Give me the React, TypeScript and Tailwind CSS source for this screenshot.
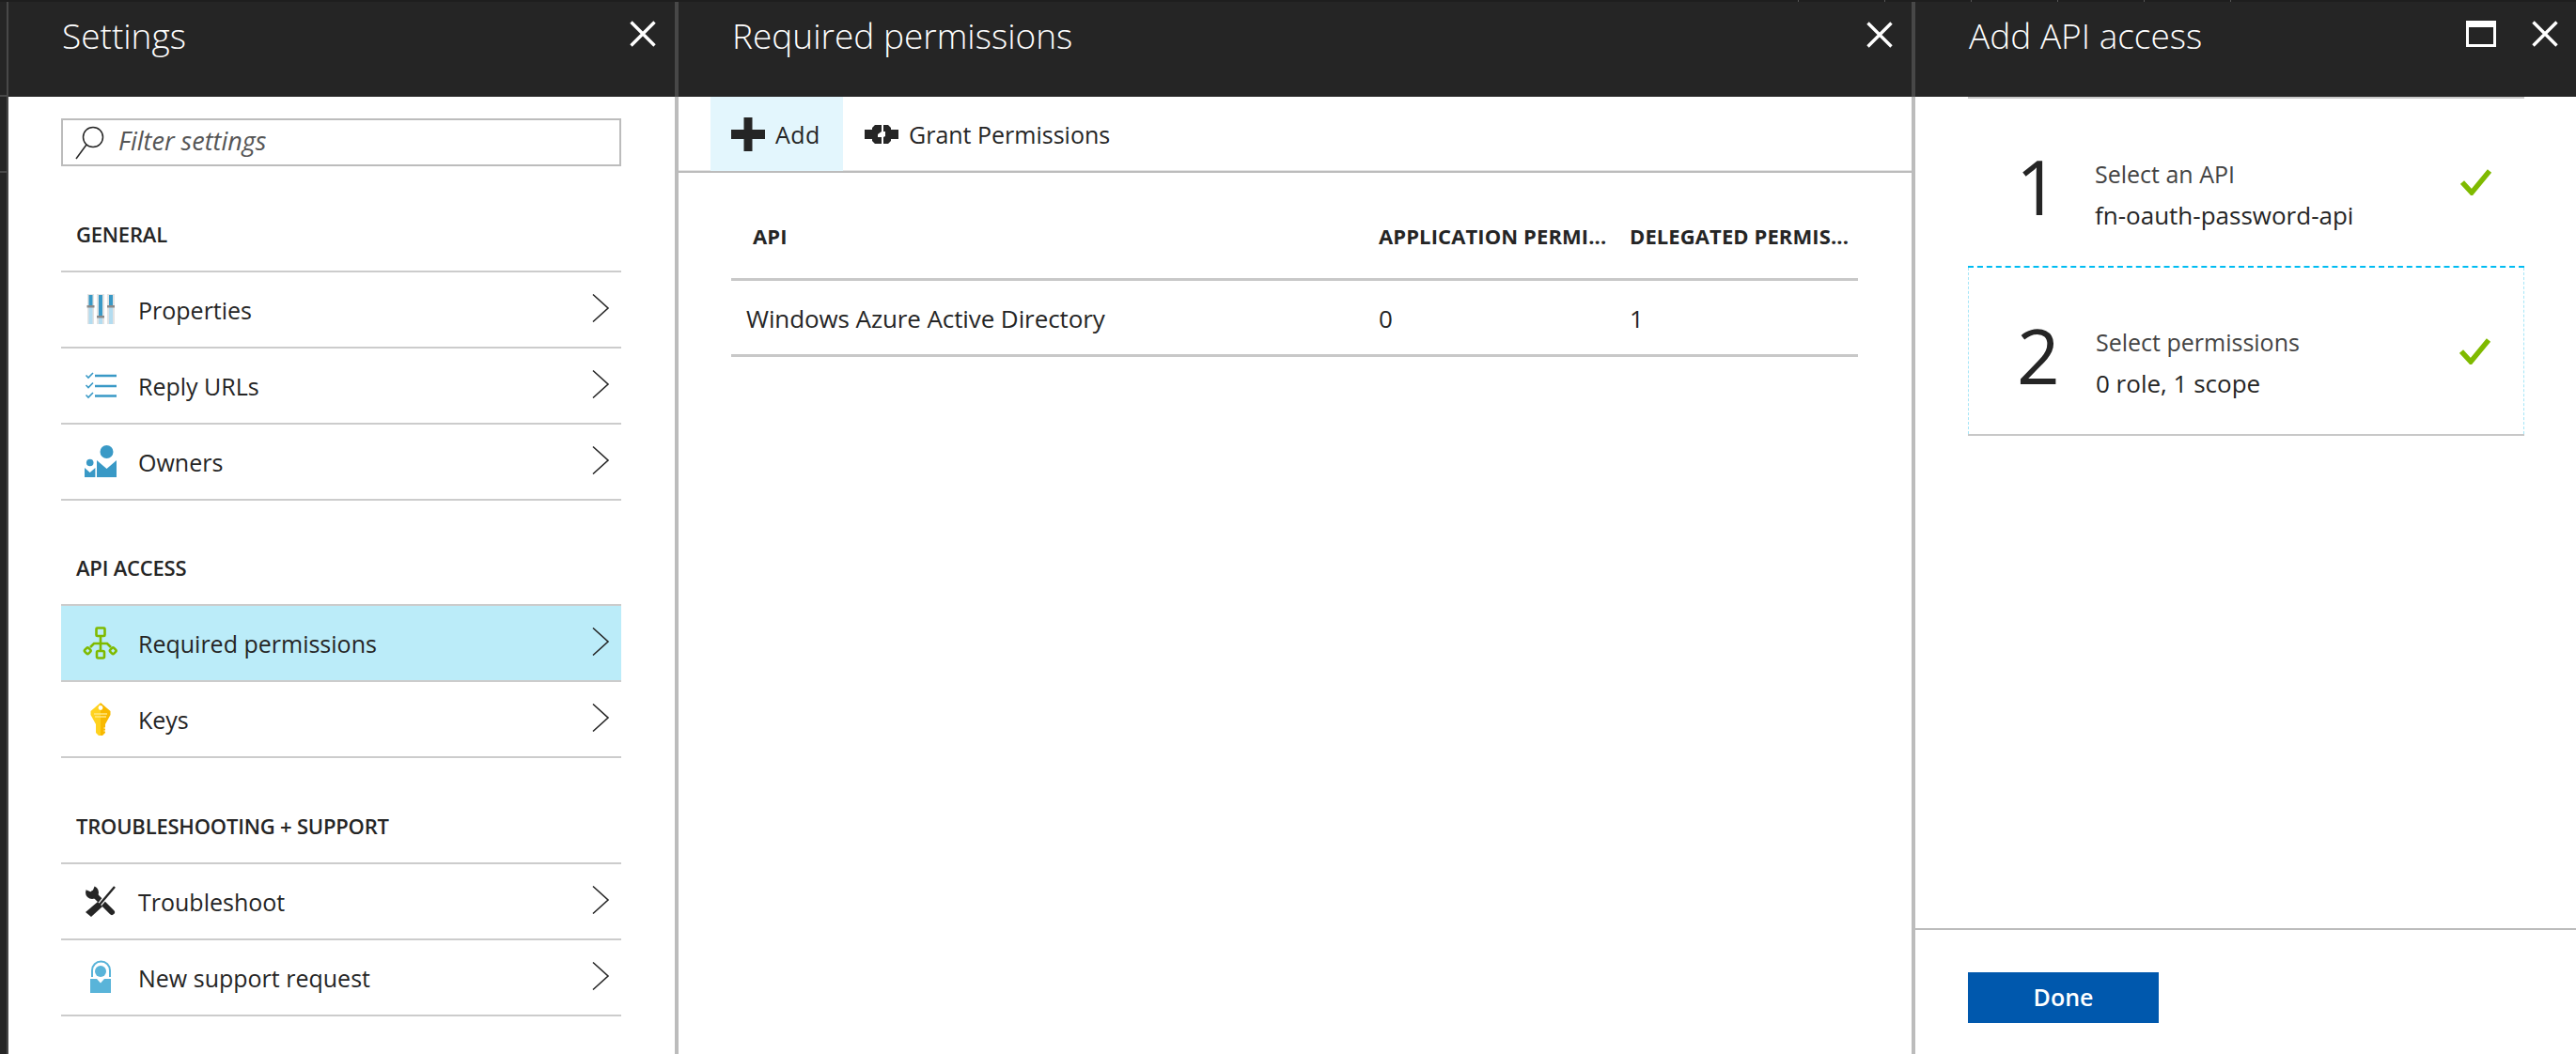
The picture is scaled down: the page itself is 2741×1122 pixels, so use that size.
import type { ReactNode } from "react";

const font = "font-['Open_Sans','Noto_Sans',sans-serif]";

function CloseIcon() {
  return (
    <svg width="28" height="28" viewBox="0 0 28 28" className="block">
      <path d="M1.500 1.500 26.500 26.500M26.500 1.500 1.500 26.500" stroke="#fff" strokeWidth="3.400" fill="none" />
    </svg>
  );
}

function Chevron() {
  return (
    <svg width="20" height="32" viewBox="0 0 20 32" className="ml-auto mr-[12px] -mt-[3px] block">
      <path d="M2 1.500 18 16 2 30.500" stroke="#252525" strokeWidth="1.600" fill="none" />
    </svg>
  );
}

function PropertiesIcon() {
  return (
    <svg width="40" height="40" viewBox="0 0 40 40">
      <rect x="6" y="3" width="7" height="32" fill="#e3e3e3" />
      <rect x="16" y="3" width="8" height="32" fill="#e3e3e3" />
      <rect x="27" y="3" width="8" height="32" fill="#e3e3e3" />
      <rect x="7.500" y="4" width="4" height="12" fill="#3999c6" />
      <rect x="7.500" y="16" width="4" height="19" fill="#b3dcf0" />
      <rect x="18" y="4" width="4" height="22" fill="#3999c6" />
      <rect x="18" y="26" width="4" height="9" fill="#b3dcf0" />
      <rect x="29" y="4" width="4" height="12" fill="#3999c6" />
      <rect x="29" y="16" width="4" height="19" fill="#b3dcf0" />
      <rect x="5.500" y="15" width="8" height="2.500" fill="#8a8a8a" />
      <rect x="16" y="26" width="8" height="2.500" fill="#8a8a8a" />
      <rect x="27" y="15" width="8" height="2.500" fill="#8a8a8a" />
    </svg>
  );
}

function ReplyIcon() {
  return (
    <svg width="40" height="40" viewBox="0 0 40 40">
      <path d="M14 9h23M14 20h23M14 30.500h23" stroke="#3999c6" strokeWidth="2.600" fill="none" />
      <path d="M4.500 8.500 7 11l5-5M4.500 19 7 21.500l5-5M4.500 29.500 7 32l5-5" stroke="#3999c6" strokeWidth="1.600" fill="none" />
    </svg>
  );
}

function OwnersIcon() {
  return (
    <svg width="40" height="40" viewBox="0 0 40 40">
      <circle cx="26.500" cy="9" r="7" fill="#3999c6" />
      <path d="M16 18l10.500 9L37 18v18H16z" fill="#3999c6" />
      <circle cx="8.700" cy="20.500" r="3.800" fill="#3999c6" />
      <path d="M3 26l5.700 5 5.700-5v10H3z" fill="#3999c6" />
    </svg>
  );
}

function TreeIcon() {
  return (
    <svg width="40" height="40" viewBox="0 0 40 40">
      <g stroke="#7fba00" strokeWidth="2.600" fill="none">
        <rect x="15.500" y="3.500" width="9" height="8.500" rx="1" />
        <path d="M20 12v16M20 20h-7l-4 4M20 20h7l4 4" />
        <rect x="16" y="28" width="8" height="7.500" rx="1.500" />
        <rect x="3.500" y="25" width="5.500" height="5.500" rx="1.500" transform="rotate(45 6.250 27.750)" />
        <rect x="30.500" y="25" width="5.500" height="5.500" rx="1.500" transform="rotate(45 33.250 27.750)" />
      </g>
    </svg>
  );
}

function KeyIcon() {
  return (
    <svg width="40" height="40" viewBox="0 0 40 40">
      <path d="M20 2l10.500 9v4L25 25v9l-3 3h-2z" fill="#f8b900" />
      <path d="M20 2 9.500 11v4L15 25v9l3 3h2z" fill="#ffd21f" />
      <path d="M23.500 29h2M23.500 32h2" stroke="#fff" strokeWidth="1" />
      <path d="M13 14h14M14 17h12" stroke="#ffe680" strokeWidth="1.500" />
      <circle cx="20" cy="7.500" r="2.400" fill="#fff" />
    </svg>
  );
}

function ToolsIcon() {
  return (
    <svg width="40" height="40" viewBox="0 0 40 40">
      <circle cx="11" cy="10" r="7" fill="#252525" />
      <path d="M11 10 4 7 8 0h7z" fill="#fff" />
      <path d="M12 11 32 31" stroke="#252525" strokeWidth="6" strokeLinecap="round" fill="none" />
      <path d="M35 4 18 24" stroke="#fff" strokeWidth="5" fill="none" />
      <path d="M35 4 18 24" stroke="#252525" strokeWidth="2.400" fill="none" />
      <path d="M17 20l5 5L10 36l-6-5z" fill="#252525" />
    </svg>
  );
}

function SupportIcon() {
  return (
    <svg width="40" height="40" viewBox="0 0 40 40">
      <path d="M11 19v-7a9.500 9.500 0 0 1 19 0v7" stroke="#59b4d9" strokeWidth="2" fill="none" />
      <circle cx="20" cy="13" r="6" fill="#59b4d9" />
      <path d="M9 21h7l4 4.500 4-4.500h7v15H9z" fill="#59b4d9" />
    </svg>
  );
}

function Row({ icon, label, active }: { icon: ReactNode; label: string; active?: boolean }) {
  return (
    <div className={`flex h-[81px] items-center border-b-2 border-[#cccccc] ${active ? "bg-[#bbecf9]" : ""}`}>
      <div className="ml-[22px] mr-[20px] flex h-[40px] w-[40px] items-center justify-center">{icon}</div>
      <span className="text-[25px] leading-[32px] text-[#252525]">{label}</span>
      <Chevron />
    </div>
  );
}

function Heading({ children }: { children: string }) {
  return (
    <div className="flex h-[110px] items-end pb-[27px] pl-[16px]">
      <span className="text-[22px] leading-[24px] font-semibold tracking-[-0.2px] text-[#252525]">{children}</span>
    </div>
  );
}

function PanelHeader({ title, divider, children }: { title: string; divider?: boolean; children: ReactNode }) {
  return (
    <div className={`flex h-[101px] shrink-0 items-start bg-[#252525] pl-[57px] ${divider ? "-mr-[4px] border-r-4 border-[#484848]" : ""}`}>
      <h2 className="mt-[11px] text-[37px] leading-[50px] font-light text-white">{title}</h2>
      {children}
    </div>
  );
}

function Check() {
  return (
    <svg width="34" height="28" viewBox="0 0 34 28" className="ml-auto block">
      <path d="M2 14l10 11L31 2" stroke="#7fba00" strokeWidth="5.500" fill="none" />
    </svg>
  );
}

function Step({ digit, title, value, current }: { digit: string; title: string; value: string; current?: boolean }) {
  return (
    <div className={`flex items-center pr-[34px] ${current ? "h-[177px] border-x border-dashed border-[#a6e6f7]" : "h-[178px]"}`}>
      <span className="ml-[51px] mt-[8px] w-[84px] text-[80px] leading-[90px] text-[#252525]">{digit}</span>
      <div className="mt-[25px]">
        <div className="text-[25px] leading-[44px] text-[#444444]">{title}</div>
        <div className="text-[26px] leading-[44px] text-[#252525]">{value}</div>
      </div>
      <Check />
    </div>
  );
}

export default function App() {
  return (
    <div className={`${font} h-[1122px] w-[2741px] overflow-hidden bg-white`}>
      <div className="flex h-[2px] gap-[91px] bg-[#1e1e1e] pl-[1913px]">
        {[0, 1, 2, 3, 4, 5].map((i) => (
          <div key={i} className="w-px bg-[#555555]" />
        ))}
      </div>
      <div className="flex h-[1120px]">
        {/* strip of the blade behind */}
        <div className="w-[9px] shrink-0 border-r-2 border-[#484848] bg-[#252525]">
          <div className="h-[101px] border-b-2 border-[#484848]" />
          <div className="h-[81px] border-b-2 border-[#484848]" />
        </div>

        {/* settings blade */}
        <section className="flex w-[713px] shrink-0 flex-col border-r-4 border-[#bcbcbc]">
          <PanelHeader title="Settings" divider>
            <button className="mt-[20px] ml-auto mr-[20px]">
              <CloseIcon />
            </button>
          </PanelHeader>
          <div className="flex flex-col pl-[56px] pr-[57px]">
            <div className="mt-[23px] flex h-[51px] items-center border-2 border-[#bcbcbc]">
              <svg width="36" height="44" viewBox="0 0 36 44" className="ml-[11px] block">
                <circle cx="21" cy="16" r="10.500" stroke="#252525" strokeWidth="1.500" fill="none" />
                <path d="M14 24 3 39" stroke="#252525" strokeWidth="1.500" fill="none" />
              </svg>
              <span className="ml-[12px] -mt-[2px] text-[27px] italic text-[#555555]">Filter settings</span>
            </div>
            <div className="h-px" />
            <Heading>GENERAL</Heading>
            <div className="border-t-2 border-[#cccccc]">
              <Row icon={<PropertiesIcon />} label="Properties" />
              <Row icon={<ReplyIcon />} label="Reply URLs" />
              <Row icon={<OwnersIcon />} label="Owners" />
            </div>
            <Heading>API ACCESS</Heading>
            <div className="border-t-2 border-[#cccccc]">
              <Row icon={<TreeIcon />} label="Required permissions" active />
              <Row icon={<KeyIcon />} label="Keys" />
            </div>
            <div className="h-px" />
            <Heading>TROUBLESHOOTING + SUPPORT</Heading>
            <div className="border-t-2 border-[#cccccc]">
              <Row icon={<ToolsIcon />} label="Troubleshoot" />
              <Row icon={<SupportIcon />} label="New support request" />
            </div>
          </div>
        </section>

        {/* required permissions blade */}
        <section className="flex w-[1316px] shrink-0 flex-col border-r-4 border-[#bcbcbc]">
          <PanelHeader title="Required permissions" divider>
            <button className="mt-[21px] ml-auto mr-[20px]">
              <CloseIcon />
            </button>
          </PanelHeader>
          <div className="flex h-[81px] shrink-0 items-stretch border-b-2 border-[#bcbcbc] pl-[34px] text-[25px] text-[#252525] shadow-[inset_0_-1px_0_#e4e4e4]">
            <div className="flex w-[141px] items-center bg-[#e3f6fd] pl-[22px]">
              <svg width="36" height="36" viewBox="0 0 36 36" className="block">
                <path d="M13.500 0h9v13h13.500v10H22.500v13h-9V23H0V13h13.500z" fill="#252525" />
              </svg>
              <span className="ml-[11px] mt-[2px] tracking-[0.5px]">Add</span>
            </div>
            <div className="ml-[23px] flex items-center">
              <svg width="36" height="20" viewBox="0 0 36 20" className="block">
                <path d="M0 5h8V3l3-3h7v7l-4 3v3h4v7h-7l-3-3v-2H0z" fill="#252525" />
                <path d="M36 5h-8V3l-3-3h-5v7h2v5l-2 1v7h5l3-3v-2h8z" fill="#252525" />
              </svg>
              <span className="ml-[11px] mt-[2px]">Grant Permissions</span>
            </div>
          </div>
          <div className="flex flex-col pl-[56px] pr-[57px] text-[#252525]">
            <div className="grid h-[115px] grid-cols-[689px_267px_1fr] items-end border-b-[3px] border-[#c8c8c8] pb-[33px] text-[22px] leading-[24px] font-bold tracking-[0.1px]">
              <span className="pl-[23px]">API</span>
              <span className="whitespace-nowrap">APPLICATION PERMI...</span>
              <span className="whitespace-nowrap">DELEGATED PERMIS...</span>
            </div>
            <div className="grid h-[81px] grid-cols-[689px_267px_1fr] items-center border-b-[3px] border-[#c8c8c8] text-[26px] tracking-[-0.1px]">
              <span className="pl-[16px] pt-[2px]">Windows Azure Active Directory</span>
              <span className="pt-[2px]">0</span>
              <span className="pt-[2px]">1</span>
            </div>
          </div>
        </section>

        {/* add api access blade */}
        <section className="flex flex-1 flex-col">
          <PanelHeader title="Add API access">
            <div className="mt-[20px] ml-auto mr-[19px] flex items-start">
              <div className="h-[28px] w-[32px] border-[3px] border-t-[7px] border-white" />
              <button className="ml-[38px]">
                <CloseIcon />
              </button>
            </div>
          </PanelHeader>
          <div className="flex flex-1 flex-col">
            <div className="flex-1 pl-[56px] pr-[55px]">
              <div className="h-[2px] bg-[#c8c8c8]" />
              <Step digit="1" title="Select an API" value="fn-oauth-password-api" />
              <div className="border-t-2 border-b-2 border-t-[#00bcf2] border-b-[#c8c8c8] [border-top-style:dashed]">
                <Step digit="2" title="Select permissions" value="0 role, 1 scope" current />
              </div>
            </div>
            <div className="h-[134px] shrink-0 border-t-2 border-[#bcbcbc] pt-[45px] pl-[56px]">
              <button className="h-[54px] w-[203px] bg-[#0058ad] text-[25px] font-semibold text-white">Done</button>
            </div>
          </div>
        </section>
      </div>
    </div>
  );
}
